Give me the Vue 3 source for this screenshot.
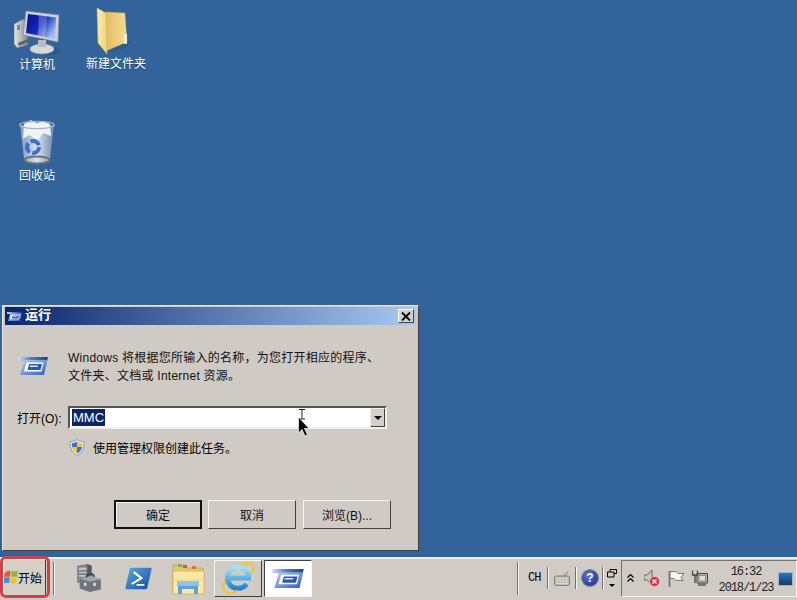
<script setup>
import { ref } from 'vue'

const command = ref('MMC')

const desktopIcons = [
  { id: 'computer', label: '计算机' },
  { id: 'folder', label: '新建文件夹' },
  { id: 'bin', label: '回收站' },
]
</script>

<template>
  <div class="screen">
    <svg class="defs" width="0" height="0">
      <defs>
        <linearGradient id="runBand" x1="0" x2="1" y1="0" y2="0">
          <stop offset="0" stop-color="#d5dfee" />
          <stop offset="0.45" stop-color="#4f7cc8" />
          <stop offset="1" stop-color="#1c3f9a" />
        </linearGradient>
        <linearGradient id="runBody" x1="0" x2="1" y1="0" y2="1">
          <stop offset="0" stop-color="#bcd2f2" />
          <stop offset="1" stop-color="#2b5cc0" />
        </linearGradient>
        <symbol id="runIcon" viewBox="0 0 30 20">
          <path d="M0 1H30L29 5H0Z" fill="url(#runBand)" />
          <path d="M6.5 4H29.5L26 19H2Z" fill="url(#runBody)" />
          <path d="M8.5 6.5H25.5L23.5 15.5H6Z" fill="#fff" />
          <path d="M11 8H24L22.6 14H9.5Z" fill="#2c55b8" />
          <path d="M12 9.5H20L19.6 11H11.6Z" fill="#dfe9fa" />
        </symbol>
      </defs>
    </svg>

    <main class="desktop">
      <div class="icons">
        <div v-for="icon in desktopIcons" :key="icon.id" class="icon" :class="icon.id">
          <svg v-if="icon.id === 'computer'" width="46" height="46" viewBox="0 0 46 46">
            <defs>
              <linearGradient id="screenFill" x1="0" x2="1" y1="0" y2="0.6">
                <stop offset="0" stop-color="#06128c" />
                <stop offset="0.55" stop-color="#1228b8" />
                <stop offset="1" stop-color="#9dbbee" />
              </linearGradient>
              <linearGradient id="towerFill" x1="0" x2="1" y1="0" y2="0">
                <stop offset="0" stop-color="#e6e9e6" />
                <stop offset="1" stop-color="#7f878d" />
              </linearGradient>
            </defs>
            <ellipse cx="33" cy="41" rx="13" ry="4" fill="#27496f" opacity="0.5" />
            <path d="M0 14 9 9 14 12V35L3 38 0 34Z" fill="url(#towerFill)" stroke="#5f6972" stroke-width="0.6" />
            <rect x="3" y="15" width="3" height="5" fill="#5c9a78" />
            <path d="M4 33 16 28V31L5 36Z" fill="#5b646c" />
            <ellipse cx="28" cy="39" rx="12" ry="5" fill="#d6d9da" stroke="#9aa0a5" stroke-width="0.6" />
            <path d="M24 30H32V37H24Z" fill="#b7bcc0" />
            <path d="M12 1 45 5 44 32 9 25Z" fill="#ccd1d5" stroke="#7f888f" stroke-width="0.7" />
            <path d="M14 4 42 7.5 41 29 12 23Z" fill="url(#screenFill)" />
            <path d="M25 5.5 33 6.5 31 27 24 25.5Z" fill="#fff" opacity="0.25" />
          </svg>

          <svg v-else-if="icon.id === 'folder'" width="36" height="46" viewBox="0 0 36 46">
            <defs>
              <linearGradient id="folderBack" x1="0" x2="1" y1="0" y2="0">
                <stop offset="0" stop-color="#e3bd62" />
                <stop offset="1" stop-color="#f4dc94" />
              </linearGradient>
              <linearGradient id="folderFront" x1="0" x2="1" y1="0" y2="0.3">
                <stop offset="0" stop-color="#fbeeb0" />
                <stop offset="1" stop-color="#f2d682" />
              </linearGradient>
            </defs>
            <path d="M11 5 30 5 31 33 35 35 29 40 11 44Z" fill="#264d7d" opacity="0.45" />
            <path d="M10 4 29 5 31 34 10 43Z" fill="url(#folderBack)" stroke="#c9a24e" stroke-width="0.5" />
            <path d="M28 26H31V36H28Z" fill="#eef0c8" />
            <path d="M1 0 10 5 11 46 2 35Z" fill="url(#folderFront)" stroke="#d3ae57" stroke-width="0.5" />
          </svg>

          <svg v-else width="38" height="46" viewBox="0 0 38 46">
            <defs>
              <linearGradient id="binFill" x1="0" x2="1" y1="0" y2="0">
                <stop offset="0" stop-color="#7e97b8" />
                <stop offset="0.5" stop-color="#d8e4f0" />
                <stop offset="1" stop-color="#7088ab" />
              </linearGradient>
            </defs>
            <path d="M2 5 6 38Q7 43 19 44 31 43 32 38L36 5Z" fill="url(#binFill)" />
            <path d="M6 4 13 0 19 3 25 1 32 4 33 16 25 13 20 20 11 15 5 19Z" fill="#eef3f8" />
            <ellipse cx="19" cy="5" rx="17.5" ry="3.6" fill="none" stroke="#a8b4c2" stroke-width="1.2" />
            <circle cx="15" cy="27" r="6" fill="none" stroke="#3a6ed0" stroke-width="4" stroke-dasharray="10 2.5" />
            <ellipse cx="19" cy="40" rx="12.5" ry="3.5" fill="none" stroke="#6d7277" stroke-width="2" />
          </svg>
          <span class="icon-label">{{ icon.label }}</span>
        </div>
      </div>

      <section class="run-window">
        <header class="title-bar">
          <svg class="title-icon" width="15" height="11"><use href="#runIcon" /></svg>
          <span class="title-text">运行</span>
          <button class="close-btn">
            <svg width="10" height="9" viewBox="0 0 10 9">
              <path d="M1 0.5 9 8.5M9 0.5 1 8.5" stroke="#000" stroke-width="1.8" fill="none" />
            </svg>
          </button>
        </header>

        <div class="intro">
          <svg class="run-large" width="30" height="20"><use href="#runIcon" /></svg>
          <p>Windows 将根据您所输入的名称，为您打开相应的程序、<br />文件夹、文档或 Internet 资源。</p>
        </div>

        <div class="open-row">
          <label class="open-label">打开(O):</label>
          <div class="combo">
            <span class="selected">{{ command }}</span>
            <span class="combo-arrow"><i></i></span>
            <div class="cursor">
              <svg width="16" height="29" viewBox="0 0 16 29">
                <path d="M4 0.5H7M10 0.5H7M7 0.5V10M4 10H10" stroke="#222" stroke-width="1" fill="none" />
                <path d="M3.5 8V24L7 20.5 10 27 12.5 26 9.5 19.5H14Z" fill="#000" stroke="#fff" stroke-width="0.7" />
              </svg>
            </div>
          </div>
        </div>

        <div class="admin-row">
          <svg width="16" height="17" viewBox="0 0 16 17">
            <path d="M8 0.5C10 2 12 2.6 15 2.6 15.2 9 13.5 13.5 8 16.5 2.5 13.5 0.8 9 1 2.6 4 2.6 6 2 8 0.5Z" fill="#e7ecf3" stroke="#7e8ca3" stroke-width="0.8" />
            <path d="M8 2.5V8H3C3 7 2.8 5.5 2.8 4.2 4.6 4.2 6.4 3.5 8 2.5Z" fill="#3f6ecb" />
            <path d="M8 8H13C12.7 10.5 11 13 8 14.6Z" fill="#3f6ecb" />
            <path d="M8 2.5C9.6 3.5 11.4 4.2 13.2 4.2 13.2 5.5 13.1 7 13 8H8Z" fill="#f3c433" />
            <path d="M3 8H8V14.6C5 13 3.3 10.5 3 8Z" fill="#f3c433" />
          </svg>
          <span>使用管理权限创建此任务。</span>
        </div>

        <div class="actions">
          <button class="btn default">确定</button>
          <button class="btn">取消</button>
          <button class="btn">浏览(B)...</button>
        </div>
      </section>
    </main>

    <footer class="taskbar">
      <button class="start">
        <svg width="14" height="16" viewBox="0 0 15 16">
          <path d="M7 1.5C4 0.8 1.5 2.2 0.5 5L0 7.6H6.4Z" fill="#ea5a26" />
          <path d="M8 1.6C10.5 2.4 12.5 2 15 1L14 7.6H7.5Z" fill="#86bd35" />
          <path d="M0 8.6H6.2L5.4 14.6C3 14 1 14 0 15Z" fill="#3a8ede" />
          <path d="M7.3 8.6H13.8L13 13C11.5 15.2 8.5 15.6 6.5 14.7Z" fill="#f6bf29" />
        </svg>
        <span>开始</span>
      </button>
      <div class="start-mark"></div>
      <i class="sep first"></i>

      <div class="quick">
        <span class="quick-item tools">
          <svg width="28" height="28" viewBox="0 0 30 33">
            <path d="M1 2 13 0 18 2V22H1Z" fill="#7c8186" />
            <path d="M3 4H12V7H3ZM3 9H12V11H3ZM3 13H12V15H3ZM3 17H12V19H3Z" fill="#c0c3c5" />
            <path d="M13 0 18 2V22H13Z" fill="#565b60" />
            <path d="M4 17 17 14 29 18V30L16 33 4 29Z" fill="#6e7479" />
            <path d="M4 17 17 14 29 18 16 21Z" fill="#a3a8ab" />
            <path d="M12 16C12 11 20 10 21 15" stroke="#3e4347" stroke-width="2" fill="none" />
            <rect x="9" y="22" width="3" height="4" fill="#d7d9da" />
            <rect x="20" y="22" width="3" height="4" fill="#d7d9da" />
          </svg>
        </span>
        <span class="quick-item ps">
          <svg width="27" height="23" viewBox="0 0 28 27" preserveAspectRatio="none">
            <defs>
              <linearGradient id="psFill" x1="0" x2="1" y1="0" y2="1">
                <stop offset="0" stop-color="#5da7e0" />
                <stop offset="1" stop-color="#124f9c" />
              </linearGradient>
            </defs>
            <path d="M6 1H27Q28 1 27.5 3L23 25Q22.5 26 21 26H1Q0 26 0.5 24L5 2Q5 1 6 1Z" fill="url(#psFill)" />
            <path d="M9 6 17 13 7 20" stroke="#fff" stroke-width="2.4" fill="none" />
            <path d="M12 21H20" stroke="#fff" stroke-width="2" />
          </svg>
        </span>
        <span class="quick-item explorer">
          <svg width="33" height="33" viewBox="0 0 33 33">
            <path d="M1 3H13L15 6H31V31H1Z" fill="#e8c566" stroke="#c49f47" stroke-width="0.8" />
            <rect x="6" y="2" width="4" height="3" fill="#7cae52" />
            <rect x="11" y="3" width="4" height="3" fill="#cf5a4a" />
            <rect x="20" y="4" width="4" height="3" fill="#d47a3c" />
            <path d="M1 9H32V32H1Z" fill="#fbe9a8" stroke="#d1ad52" stroke-width="0.8" />
            <path d="M1 18H32" stroke="#efd27d" />
            <path d="M6 23H26V32H22V27H10V32H6Z" fill="#5fa3d5" />
            <path d="M5 19H27V24H5Z" fill="#8cc3e6" />
          </svg>
        </span>
      </div>

      <div class="task-btn">
        <svg width="34" height="33" viewBox="0 0 34 33">
          <defs>
            <linearGradient id="ieFill" x1="0" x2="0" y1="0" y2="1">
              <stop offset="0" stop-color="#a5e2f7" />
              <stop offset="1" stop-color="#1c86d6" />
            </linearGradient>
          </defs>
          <path d="M3 28C0 20 12 4 26 1 33 0 34 6 30 11" fill="none" stroke="#f0c43a" stroke-width="2.2" />
          <path d="M25.5 22A10.5 10.5 0 1 1 27.5 16H7" fill="none" stroke="url(#ieFill)" stroke-width="5" />
          <path d="M3 28C5 33 12 31 17 29" fill="none" stroke="#f0c43a" stroke-width="2" />
        </svg>
      </div>
      <div class="task-btn active">
        <svg width="32" height="21"><use href="#runIcon" /></svg>
      </div>

      <div class="spacer"></div>

      <i class="sep"></i>
      <span class="lang">CH</span>
      <i class="sep thin"></i>
      <span class="lang-icon">
        <svg width="16" height="15" viewBox="0 0 16 15">
          <rect x="0.5" y="5" width="15" height="9.5" rx="1.5" fill="#bfbdb6" stroke="#7f7f7c" />
          <path d="M2.5 7.5H13.5M2.5 10H13.5M2.5 12.5H13.5" stroke="#eceae4" stroke-dasharray="2 1" />
          <path d="M10 5C10 2 14 3 14 0.5" stroke="#7f7f7c" fill="none" />
        </svg>
      </span>
      <i class="sep thin"></i>
      <span class="help">?</span>
      <i class="sep thin"></i>
      <span class="lang-tools">
        <svg width="10" height="9" viewBox="0 0 10 9">
          <path d="M3 2.5V0.5H9.5V4.5H7M0.5 3H7V8H0.5Z" fill="none" stroke="#000" />
        </svg>
        <i class="tri"></i>
      </span>

      <div class="tray">
        <svg class="chevron" width="7" height="8" viewBox="0 0 7 8">
          <path d="M0.5 3.5 3.5 0.5 6.5 3.5M0.5 7.5 3.5 4.5 6.5 7.5" fill="none" stroke="#000" stroke-width="1.2" />
        </svg>
        <svg width="16" height="17" viewBox="0 0 16 17" class="t-sound">
          <path d="M0 5H3L8 0V14L3 10H0Z" fill="#c9c7c0" stroke="#5f5f5b" stroke-width="0.9" />
          <circle cx="10.5" cy="11.5" r="5" fill="#d8313c" stroke="#f0c0c0" stroke-width="0.8" />
          <path d="M8.5 9.5 12.5 13.5M12.5 9.5 8.5 13.5" stroke="#fff" stroke-width="1.3" />
        </svg>
        <svg width="16" height="17" viewBox="0 0 16 17" class="t-flag">
          <path d="M1.5 1V17" stroke="#777772" stroke-width="1.8" />
          <path d="M2 1.5H8L10 3.5H16L13 7.5 15 10.5H8L6 8.5H2Z" fill="#f4f3ee" stroke="#6c6c68" stroke-width="0.9" />
        </svg>
        <svg width="16" height="17" viewBox="0 0 16 17" class="t-net">
          <path d="M5 3.5H15.5V13H5Z" fill="#b4b3ad" stroke="#45453f" />
          <path d="M7 5.5H13.5V11H7Z" fill="#dededa" stroke="#66665f" stroke-width="0.6" />
          <path d="M6 13H14V16H6Z" fill="#77776f" />
          <path d="M0.5 0.5V5H5.5V0.5M3 5V13" fill="none" stroke="#45453f" stroke-width="1.3" />
        </svg>
        <div class="clock">
          <span>16:32</span>
          <span>2018/1/23</span>
        </div>
        <div class="show-desktop"></div>
      </div>
    </footer>
  </div>
</template>

<style>
html,
body {
  margin: 0;
  background: #33639b;
}
</style>

<style scoped>
.screen {
  width: 797px;
  height: 600px;
  display: flex;
  flex-direction: column;
  overflow: hidden;
  font-family: "Liberation Sans", "Noto Sans CJK SC", sans-serif;
  font-size: 12px;
  color: #000;
  background: #33639b;
}
.defs {
  position: absolute;
}
.desktop {
  flex: 1;
  position: relative;
}
.icons {
  display: grid;
  grid-template-columns: 74px 84px;
  grid-template-rows: 111px 60px;
  padding-top: 8px;
}
.icon {
  display: flex;
  flex-direction: column;
  align-items: center;
  color: #fff;
}
.icon svg {
  height: 46px;
  flex: none;
}
.computer svg {
  margin-top: 2px;
}
.folder svg {
  margin-left: -4px;
}
.bin {
  grid-column: 1;
  margin-top: 1px;
}
.icon-label {
  margin-top: 2px;
  line-height: 16px;
  text-shadow: 0 1px 1px rgba(0, 0, 0, 0.35);
}
.computer .icon-label {
  margin-top: 1px;
}

.run-window {
  position: absolute;
  left: 2px;
  top: 305px;
  width: 417px;
  height: 246px;
  box-sizing: border-box;
  padding: 1px 2px 2px;
  background: #cfcbc4;
  border: 1px solid;
  border-color: #e6e4df #404040 #404040 #e6e4df;
  display: flex;
  flex-direction: column;
}
.title-bar {
  height: 18px;
  flex: none;
  display: flex;
  align-items: center;
  padding: 0 2px;
  background: linear-gradient(90deg, #0a246a, #a6caf0);
  color: #fff;
}
.title-icon {
  margin-right: 3px;
}
.title-text {
  font-weight: 700;
  font-size: 13px;
  line-height: 16px;
  margin-bottom: 2px;
}
.close-btn {
  margin-left: auto;
  width: 16px;
  height: 14px;
  padding: 0;
  display: flex;
  align-items: center;
  justify-content: center;
  background: #d4d0c8;
  border: 1px solid;
  border-color: #fff #404040 #404040 #fff;
}
.intro {
  display: flex;
  margin-top: 24px;
  padding-left: 13px;
  line-height: 18px;
}
.intro p {
  margin: 0 0 0 20px;
  color: #111;
  letter-spacing: 0.25px;
}
.run-large {
  margin-top: 7px;
  flex: none;
}
.open-row {
  display: flex;
  align-items: center;
  margin-top: 21px;
  padding-left: 12px;
}
.open-label {
  width: 51px;
}
.combo {
  position: relative;
  width: 319px;
  height: 23px;
  box-sizing: border-box;
  display: flex;
  align-items: center;
  justify-content: space-between;
  background: #fff;
  border: 2px solid;
  border-color: #55534e #f2f0ec #f2f0ec #55534e;
}
.selected {
  margin-left: 2px;
  padding: 0 1px;
  line-height: 17px;
  background: #0a246a;
  color: #fff;
  font-size: 13px;
}
.combo-arrow {
  width: 15px;
  height: 19px;
  box-sizing: border-box;
  display: flex;
  align-items: center;
  justify-content: center;
  background: #d4d0c8;
  border: 1px solid;
  border-color: #f2f0ec #404040 #404040 #f2f0ec;
}
.combo-arrow i {
  border: 4px solid transparent;
  border-top-color: #000;
  border-bottom: 0;
}
.cursor {
  position: absolute;
  left: 225px;
  top: 1px;
  height: 29px;
}
.admin-row {
  display: flex;
  align-items: center;
  margin-top: 9px;
  padding-left: 64px;
  height: 18px;
}
.admin-row span {
  margin-left: 8px;
}
.actions {
  display: flex;
  gap: 6px;
  margin-top: 44px;
  padding-left: 109px;
}
.btn {
  width: 88px;
  height: 29px;
  padding: 0;
  font: inherit;
  color: #111;
  background: #cfcbc4;
  border: 1px solid;
  border-color: #f6f5f2 #404040 #404040 #f6f5f2;
}
.btn.default {
  border: 2px solid #111;
  box-shadow: inset 1px 1px 0 #f6f5f2;
}
.actions .btn:last-child {
  margin-left: 1px;
}

.taskbar {
  position: relative;
  height: 43px;
  flex: none;
  box-sizing: border-box;
  border-top: 2px solid #f2f0ec;
  padding: 0 0 3px 3px;
  display: flex;
  align-items: center;
  background: #d0ccc5;
}
.start {
  width: 43px;
  height: 38px;
  padding: 0 0 2px;
  flex: none;
  display: flex;
  align-items: center;
  font: inherit;
  color: #000;
  background: #d4d0c8;
  border: 1px solid;
  border-color: #f6f5f2 #404040 #404040 #f6f5f2;
  white-space: nowrap;
}
.start svg {
  flex: none;
}
.start-mark {
  position: absolute;
  left: 0;
  top: -3px;
  width: 50px;
  height: 42px;
  box-sizing: border-box;
  border: 3px solid #d0414a;
  border-radius: 6px;
}
.sep {
  flex: none;
  width: 1px;
  height: 33px;
  background: #f7f6f2;
  border-left: 1px solid #73716c;
}
.sep.first {
  margin-left: 7px;
}
.sep.thin {
  height: 22px;
}
.quick {
  display: flex;
  align-items: center;
  margin-left: 20px;
}
.quick-item {
  display: flex;
}
.quick-item.tools {
  margin-right: 22px;
}
.quick-item.ps {
  margin-right: 20px;
}
.quick-item.explorer {
  margin-right: 9px;
}
.task-btn {
  width: 48px;
  height: 37px;
  margin-right: 2px;
  box-sizing: border-box;
  display: flex;
  align-items: center;
  justify-content: center;
  border: 1px solid;
  border-color: #f6f5f2 #404040 #404040 #f6f5f2;
}
.task-btn.active {
  background: #fff;
  border-color: #404040 #f6f5f2 #f6f5f2 #404040;
}
.spacer {
  flex: 1;
}
.lang {
  font-family: "Liberation Mono", monospace;
  font-size: 12px;
  letter-spacing: -1px;
  width: 12px;
  margin: 0 7px 0 9px;
}
.lang-icon {
  display: flex;
  margin: 0 5px;
}
.help {
  width: 16px;
  height: 16px;
  margin: 0 4px 0 5px;
  flex: none;
  border-radius: 50%;
  background: radial-gradient(circle at 40% 35%, #5a78d8, #14287f);
  box-shadow: 0 0 0 1px #7b7d86;
  color: #fff;
  font-weight: 700;
  font-size: 12px;
  line-height: 16px;
  text-align: center;
}
.lang-tools {
  display: flex;
  flex-direction: column;
  align-items: center;
  gap: 6px;
  margin: 0 4px 0 3px;
}
.tri {
  border: 3px solid transparent;
  border-top: 3px solid #000;
  border-bottom: 0;
}
.tray {
  width: 176px;
  height: 37px;
  flex: none;
  box-sizing: border-box;
  display: flex;
  align-items: center;
  border: 1px solid;
  border-color: #73716c #f6f5f2 #f6f5f2 #73716c;
  padding-left: 5px;
}
.chevron {
  margin-right: 10px;
}
.t-sound,
.t-flag {
  margin-right: 8px;
}
.clock {
  width: 60px;
  margin-left: 8px;
  margin-top: 3px;
  display: flex;
  flex-direction: column;
  align-items: center;
  font-family: "Liberation Mono", monospace;
  font-size: 12px;
  letter-spacing: -1.1px;
  line-height: 16px;
  color: #222;
}
.show-desktop {
  width: 15px;
  height: 14px;
  box-sizing: border-box;
  margin-left: 2px;
  margin-top: 1px;
  background: linear-gradient(#1f7dc9, #1b4f8f 60%, #2b3a4e);
  border: 1px solid #9fb5ce;
}
</style>
